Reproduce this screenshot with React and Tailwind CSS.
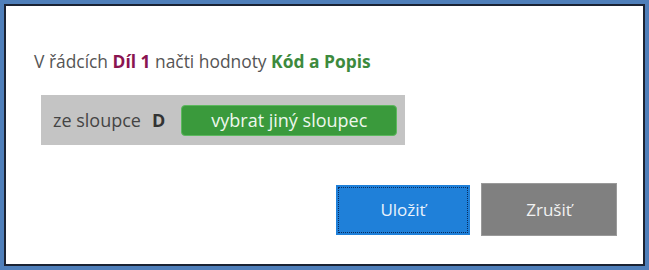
export default function App() {
  const font = { fontFamily: '"Open Sans", "Noto Sans", sans-serif' };
  return (
    <div className="w-[649px] h-[270px] bg-[#4f7fba] p-[4px]" style={font}>
      <div className="w-full h-full bg-white border-2 border-[#1b2333] flex flex-col pl-[28px] pr-[26px]">
        <div className="mt-[43px] text-[17.4px] leading-[24px] text-[#555555]">
          V řádcích <span className="font-bold text-[#8a1450]">Díl 1</span> načti hodnoty{" "}
          <span className="font-bold text-[#3d8a3d]">Kód a Popis</span>
        </div>
        <div className="mt-[22px] ml-[7px] w-[364px] h-[50px] bg-[#c4c4c4] flex items-center pl-[12px]">
          <span className="text-[18px] text-[#444444]">ze sloupce</span>
          <span className="ml-[11px] text-[18px] font-bold text-[#333333]">D</span>
          <button className="ml-[16px] w-[216px] h-[31px] rounded-[4px] bg-[#3a9a3c] border border-[#5cb85e] text-[18px] text-[#eef7ee] flex items-center justify-center">
            vybrat jiný sloupec
          </button>
        </div>
        <div className="mt-[38px] flex justify-end items-center gap-[11px]">
          <button className="w-[134px] h-[50px] bg-[#1f80d9] text-[17px] text-[#e8f2fc] outline-1 outline-dotted outline-[#0b2d5e] outline-offset-[-3px] flex items-center justify-center">
            Uložiť
          </button>
          <button className="w-[136px] h-[53px] bg-[#808080] border border-[#9a9a9a] text-[17px] text-[#f2f2f2] flex items-center justify-center">
            Zrušiť
          </button>
        </div>
      </div>
    </div>
  );
}
